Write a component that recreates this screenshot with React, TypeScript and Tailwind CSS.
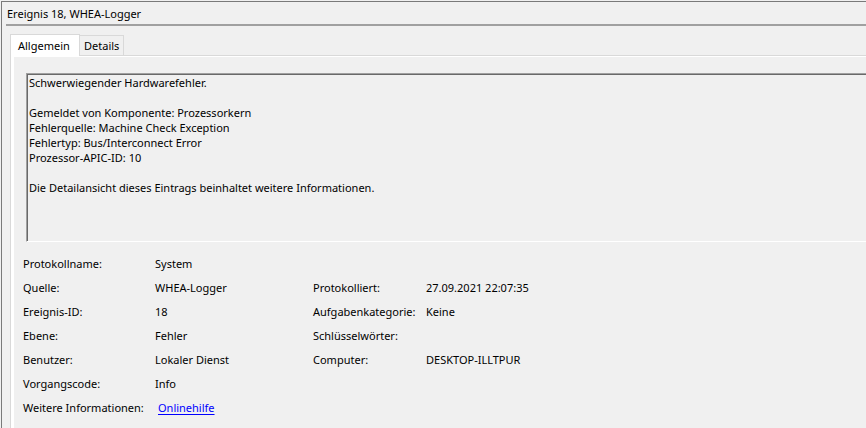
import React from "react";

const font = { fontFamily: '"Noto Sans", "Open Sans", Arial, sans-serif' };

function Row({ label, value, label2, value2, link }: { label: string; value?: string; label2?: string; value2?: string; link?: boolean }) {
  return (
    <div className="flex h-[24px] items-center">
      <div className="w-[132px] shrink-0">{label}</div>
      <div className="w-[158px] shrink-0">
        {link ? (
          <span className="ml-[3px] text-[#0000ff] underline underline-offset-2">{value}</span>
        ) : (
          value
        )}
      </div>
      {label2 !== undefined && <div className="w-[113px] shrink-0">{label2}</div>}
      {value2 !== undefined && <div>{value2}</div>}
    </div>
  );
}

export default function App() {
  return (
    <div className="w-[866px] h-[428px] bg-[#f0f0f0] overflow-hidden text-[11px] leading-[15px] text-black pl-[1px] pt-[1px]" style={font}>
      <div className="h-[427px] border-l border-t border-[#7a7a7a] flex flex-col">
        <div className="h-[22px] pl-[5px] flex items-center">Ereignis 18, WHEA-Logger</div>
        <div className="ml-[4px] h-[2px] bg-[#a0a0a0]" />
        <div className="pl-[8px] pt-[7px] flex-1 flex flex-col">
          <div className="flex items-end h-[22px]">
            <div className="h-[22px] w-[70px] bg-white border border-b-0 border-[#d9d9d9] flex items-center pl-[7px] relative z-10 -mb-[1px]">
              Allgemein
            </div>
            <div className="h-[20px] w-[44px] border border-b-0 border-l-0 border-[#d9d9d9] flex items-center pl-[4px]">
              Details
            </div>
          </div>
          <div className="flex-1 border-t border-l border-[#d9d9d9] bg-white pt-[1px] pl-[3px] flex flex-col">
            <div className="flex-1 bg-[#f0f0f0] pl-[12px] pt-[16px] flex flex-col">
              <div className="h-[169px] border-t border-l border-[#a0a0a0] border-b border-b-white">
                <div className="h-full border-t border-l border-[#696969] pl-[1px]">
                  <div>Schwerwiegender Hardwarefehler.</div>
                  <div className="h-[15px]" />
                  <div>Gemeldet von Komponente: Prozessorkern</div>
                  <div>Fehlerquelle: Machine Check Exception</div>
                  <div>Fehlertyp: Bus/Interconnect Error</div>
                  <div>Prozessor-APIC-ID: 10</div>
                  <div className="h-[15px]" />
                  <div>Die Detailansicht dieses Eintrags beinhaltet weitere Informationen.</div>
                </div>
              </div>
              <div className="-ml-[3px] pt-[9px]">
                <Row label="Protokollname:" value="System" />
                <Row label="Quelle:" value="WHEA-Logger" label2="Protokolliert:" value2="27.09.2021 22:07:35" />
                <Row label="Ereignis-ID:" value="18" label2="Aufgabenkategorie:" value2="Keine" />
                <Row label="Ebene:" value="Fehler" label2="Schlüsselwörter:" value2="" />
                <Row label="Benutzer:" value="Lokaler Dienst" label2="Computer:" value2="DESKTOP-ILLTPUR" />
                <Row label="Vorgangscode:" value="Info" />
                <Row label="Weitere Informationen:" value="Onlinehilfe" link />
              </div>
            </div>
          </div>
        </div>
      </div>
    </div>
  );
}
